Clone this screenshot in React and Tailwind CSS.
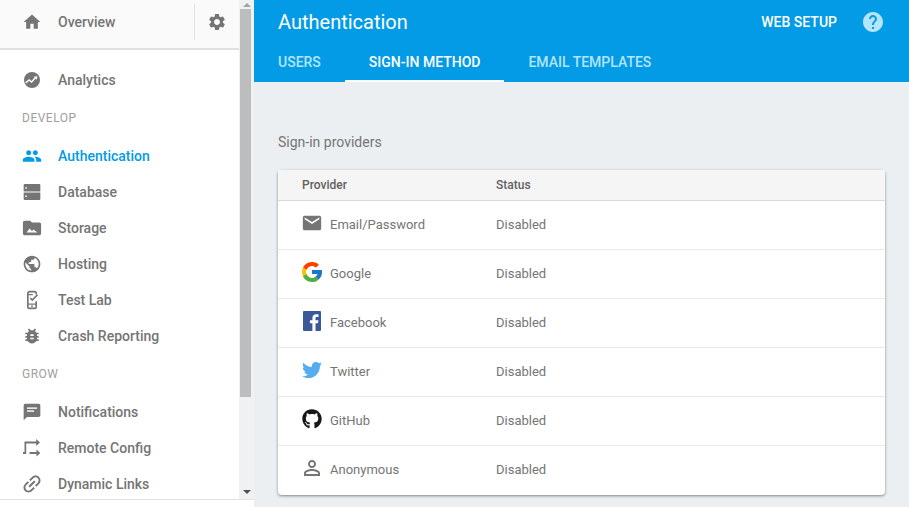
import React from "react";
import {
  MdHome,
  MdSettings,
  MdPeople,
  MdPublic,
  MdBugReport,
  MdLink,
  MdEmail,
  MdPersonOutline,
  MdHelp,
} from "react-icons/md";
import { FcGoogle } from "react-icons/fc";
import { FaTwitter, FaGithub } from "react-icons/fa";

const AnalyticsIcon = ({ className }) => (
  <svg viewBox="0 0 24 24" className={className} fill="currentColor">
    <circle cx="12" cy="12" r="9.600" />
    <path d="M4.500 15.500l4-3.500 3 2.400 4.300-4.900" fill="none" stroke="#fff" strokeWidth="1.800" />
    <path d="M14 8.200l4.300-.7-.5 4.300z" fill="#fff" />
  </svg>
);

const DatabaseIcon = ({ className }) => (
  <svg viewBox="0 0 24 24" className={className} fill="currentColor">
    <path d="M3.500 2.500h17c.8 0 1.500.7 1.500 1.500v7.300H2V4c0-.8.7-1.500 1.500-1.500z" />
    <path d="M2 12.700h20V20c0 .8-.7 1.500-1.500 1.500h-17C2.700 21.500 2 20.800 2 20z" />
    <rect x="4" y="6.200" width="1.800" height="1.800" fill="#fff" />
    <rect x="4" y="16.200" width="1.800" height="1.800" fill="#fff" />
  </svg>
);

const StorageIcon = ({ className }) => (
  <svg viewBox="1 1 22 22" className={className} fill="currentColor">
    <path d="M10 4H4c-1.100 0-2 .9-2 2v12c0 1.100.9 2 2 2h16c1.100 0 2-.9 2-2V8c0-1.100-.9-2-2-2h-8l-2-2z" />
    <path d="M6 17l3.500-4.500 2.500 3 1.500-1.800L18 17z" fill="#fff" />
  </svg>
);

const TestLabIcon = ({ className }) => (
  <svg viewBox="0 0 24 24" className={className} fill="none" stroke="currentColor">
    <path d="M17 5V4c0-1.100-.9-2-2-2H9c-1.100 0-2 .9-2 2v16c0 1.100.9 2 2 2h6c1.100 0 2-.9 2-2v-6.500" strokeWidth="2" />
    <path d="M7 5.500h6M7 17h10" strokeWidth="1.600" />
    <path d="M10 9.800l2.400 2.400 6.300-6.700" strokeWidth="2" />
    <circle cx="12" cy="19.500" r="1.100" fill="currentColor" stroke="none" />
  </svg>
);

const NotificationIcon = ({ className }) => (
  <svg viewBox="0 0 24 24" className={className} fill="currentColor">
    <path d="M20 2H4c-1.100 0-2 .9-2 2v18l4-4h14c1.100 0 2-.9 2-2V4c0-1.100-.9-2-2-2z" />
    <rect x="6" y="6.500" width="12" height="1.700" fill="#fff" />
    <rect x="6" y="10" width="8.500" height="1.700" fill="#fff" />
  </svg>
);

const RemoteConfigIcon = ({ className }) => (
  <svg viewBox="2 2 20 20" className={className} fill="currentColor">
    <path d="M3 18h3.200V7.500h10V10l3.800-3.500L16.200 3v2.500H4.500V16H3z" />
    <path d="M9.500 16h7v-2.500l3.800 3.500-3.800 3.500V18h-7z" />
  </svg>
);

const FacebookIcon = ({ className }) => (
  <svg viewBox="0 0 18 20" className={className}>
    <rect width="18" height="20" fill="#3b5998" rx="1" />
    <path
      d="M12.500 20v-7.700h2.500l.4-3h-2.900V7.500c0-.9.2-1.400 1.400-1.400h1.600V3.400c-.3 0-1.200-.1-2.300-.1-2.300 0-3.800 1.400-3.800 3.900v2.100H6.900v3h2.500V20z"
      fill="#fff"
    />
  </svg>
);

const LinkIcon = () => <MdLink className="w-6 h-6 -mx-0.5 shrink-0 -rotate-45" />;

const navIconClass = "w-5 h-5 shrink-0";

const NavItem = ({ icon: Icon, label, active }) => (
  <div
    className={
      "flex items-center h-9 shrink-0 pl-[22px] text-sm font-medium " +
      (active ? "text-[#039be5]" : "text-[#757575]")
    }
  >
    <Icon className={navIconClass} />
    <span className="ml-4">{label}</span>
  </div>
);

const SectionLabel = ({ children }) => (
  <div className="h-10 shrink-0 flex items-center pl-[22px] text-xs tracking-[0.5px] text-[#9e9e9e]">
    {children}
  </div>
);

const providers = [
  { name: "Email/Password", icon: <MdEmail className="w-[22px] h-[22px] shrink-0 text-[#757575]" /> },
  { name: "Google", icon: <FcGoogle className="w-6 h-6 shrink-0" /> },
  { name: "Facebook", icon: <FacebookIcon className="w-[18px] h-5 shrink-0" /> },
  { name: "Twitter", icon: <FaTwitter className="w-5 h-5 shrink-0 text-[#55acee]" /> },
  { name: "GitHub", icon: <FaGithub className="w-5 h-5 shrink-0 text-[#191717]" /> },
  { name: "Anonymous", icon: <MdPersonOutline className="w-6 h-6 shrink-0 text-[#757575]" /> },
];

const Sidebar = () => (
  <div className="w-[254px] shrink-0 h-full flex flex-col bg-white">
    <div className="flex flex-1 min-h-0">
      <div className="w-[239px] shrink-0 flex flex-col overflow-hidden">
        <div className="h-[50px] shrink-0 flex items-center pl-[22px] pb-1 bg-[#fafafa] border-b-2 border-[#e0e0e0] text-sm font-medium text-[#757575]">
          <MdHome className={navIconClass} />
          <span className="ml-4 flex-1">Overview</span>
          <div className="flex items-center h-9 border-l border-[#e0e0e0] pl-[12px] pr-[12px]">
            <MdSettings className={navIconClass} />
          </div>
        </div>
        <div className="h-3 shrink-0" />
        <NavItem icon={AnalyticsIcon} label="Analytics" />
        <SectionLabel>DEVELOP</SectionLabel>
        <NavItem icon={MdPeople} label="Authentication" active />
        <NavItem icon={DatabaseIcon} label="Database" />
        <NavItem icon={StorageIcon} label="Storage" />
        <NavItem icon={MdPublic} label="Hosting" />
        <NavItem icon={TestLabIcon} label="Test Lab" />
        <NavItem icon={MdBugReport} label="Crash Reporting" />
        <SectionLabel>GROW</SectionLabel>
        <NavItem icon={NotificationIcon} label="Notifications" />
        <NavItem icon={RemoteConfigIcon} label="Remote Config" />
        <NavItem icon={LinkIcon} label="Dynamic Links" />
      </div>
      <div className="w-[15px] shrink-0 bg-[#f1f1f1] flex flex-col items-center">
        <div className="h-[9px] w-full flex items-center justify-center">
          <div className="w-0 h-0 border-x-[4px] border-x-transparent border-b-[4px] border-b-[#a3a3a3]" />
        </div>
        <div className="w-[11px] h-[388px] ml-[-2px] bg-[#bdbdbd]" />
        <div className="flex-1" />
        <div className="h-[15px] w-full flex items-center justify-center">
          <div className="w-0 h-0 border-x-[4px] border-x-transparent border-t-[4px] border-t-[#505050]" />
        </div>
      </div>
    </div>
    <div className="h-2 shrink-0 bg-white border-t border-[#e0e0e0]" />
  </div>
);

const Header = () => (
  <div className="h-[82px] shrink-0 bg-[#039be5] flex flex-col text-white">
    <div className="h-11 flex items-center pl-6 pr-6">
      <div className="text-xl flex-1">Authentication</div>
      <div className="text-sm font-medium">WEB SETUP</div>
      <MdHelp className="w-6 h-6 ml-6 text-[#b3e5fc]" />
    </div>
    <div className="flex-1 flex text-sm font-medium">
      <div className="flex items-center px-6 pb-[3px] text-[#b3e5fc]">USERS</div>
      <div className="flex items-center px-6 pb-px border-b-2 border-white">SIGN-IN METHOD</div>
      <div className="flex items-center px-6 pb-[3px] text-[#b3e5fc]">EMAIL TEMPLATES</div>
    </div>
  </div>
);

const ProviderCard = () => (
  <div className="bg-white rounded-sm shadow-[0_1px_3px_rgba(0,0,0,0.45)] text-[13px]">
    <div className="h-[31px] flex items-center bg-[#f5f5f5] border-b border-[#d9d9d9] text-xs font-medium text-[#616161]">
      <div className="w-[218px] pl-6">Provider</div>
      <div>Status</div>
    </div>
    {providers.map((p, i) => (
      <div
        key={p.name}
        className={
          "h-[49px] flex items-center text-[#757575] " +
          (i < providers.length - 1 ? "border-b border-[#e9e9e9]" : "pb-px")
        }
      >
        <div className="w-[218px] pl-6 flex items-center">
          <div className="w-5 h-6 mb-1 flex items-center justify-center">{p.icon}</div>
          <span className="ml-2">{p.name}</span>
        </div>
        <div>Disabled</div>
      </div>
    ))}
  </div>
);

export default function App() {
  return (
    <div className="w-[909px] h-[507px] flex overflow-hidden font-['Roboto',sans-serif] bg-[#eceff1]">
      <Sidebar />
      <div className="flex-1 min-w-0 flex flex-col">
        <Header />
        <div className="flex-1 px-6">
          <div className="h-[88px] flex items-end pb-[18px] text-sm text-[#757575]">
            Sign-in providers
          </div>
          <ProviderCard />
        </div>
      </div>
    </div>
  );
}
